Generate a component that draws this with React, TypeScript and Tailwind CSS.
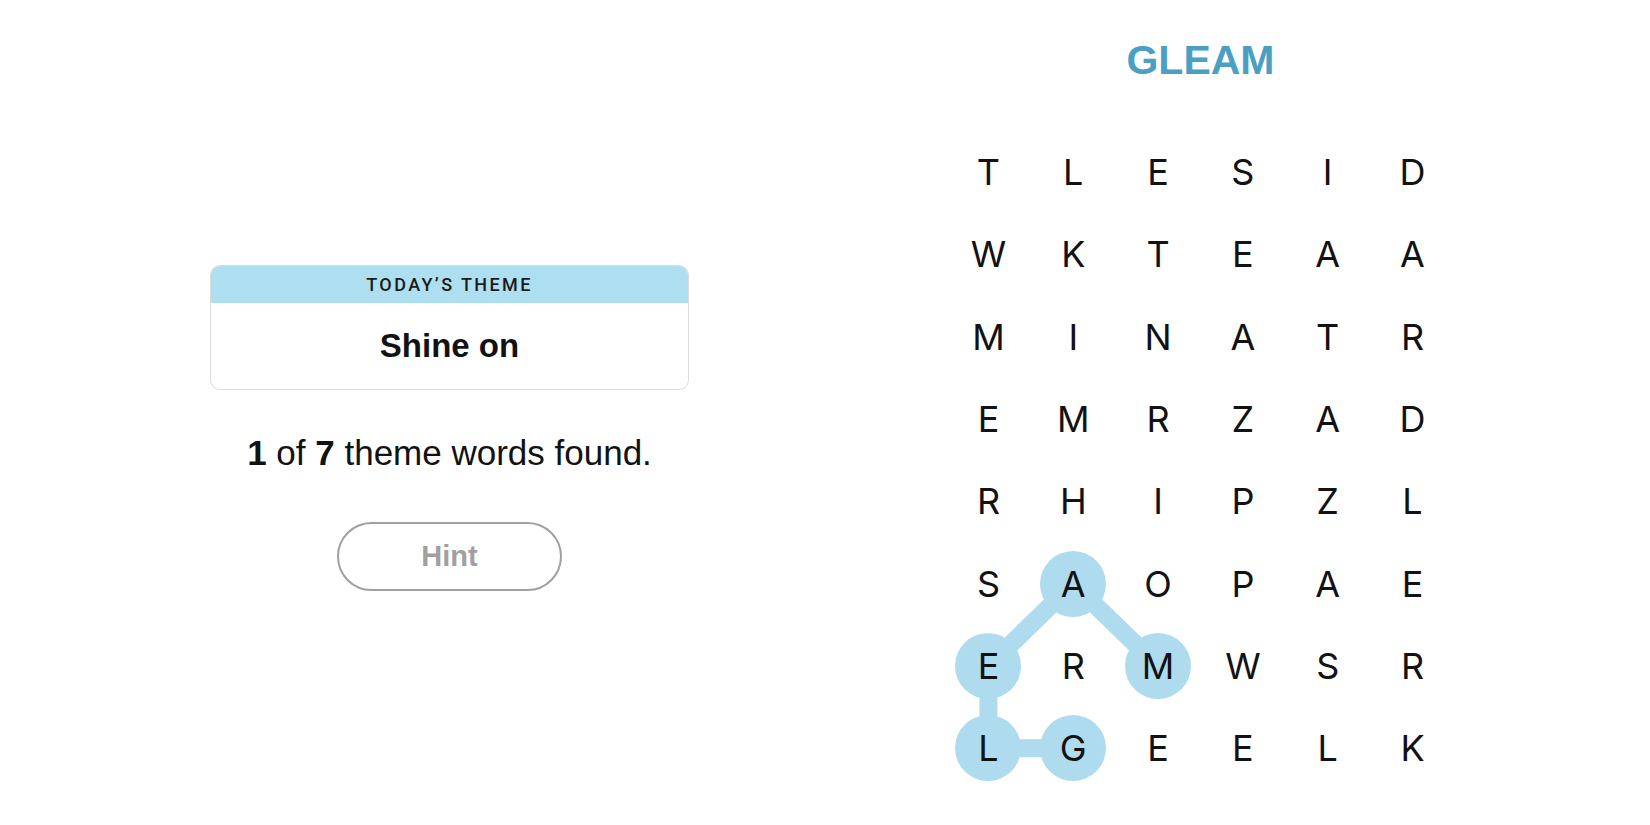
import React from "react";

const LETTERS = [
  "TLESID",
  "WKTEAA",
  "MINATR",
  "EMRZAD",
  "RHIPZL",
  "SAOPAE",
  "ERMWSR",
  "LGEELK",
];

const CW = 84.8;
const RH = 82.3;

// path cells [row, col]
const PATH: [number, number][] = [
  [6, 2],
  [5, 1],
  [6, 0],
  [7, 0],
  [7, 1],
];

const isSel = (r: number, c: number) => PATH.some(([pr, pc]) => pr === r && pc === c);

function Grid() {
  const w = CW * 6;
  const h = RH * 8;
  const pts = PATH.map(([r, c]) => `${c * CW + CW / 2},${r * RH + RH / 2}`).join(" ");
  return (
    <div className="relative mt-[50px]" style={{ width: w, height: h }}>
      <svg className="absolute inset-0" width={w} height={h} viewBox={`0 0 ${w} ${h}`}>
        <polyline points={pts} fill="none" stroke="#aedcee" strokeWidth={18} strokeLinejoin="round" />
      </svg>
      <div className="relative grid grid-cols-[repeat(6,84.8px)] auto-rows-[82.3px]">
        {LETTERS.map((row, r) =>
          row.split("").map((ch, c) => (
            <div key={`${r}-${c}`} className="relative flex items-center justify-center">
              {isSel(r, c) && (
                <div className="absolute left-1/2 top-1/2 h-[66px] w-[66px] -translate-x-1/2 -translate-y-1/2 rounded-full bg-[#aedcee]" />
              )}
              <span className="relative font-['Inter',sans-serif] text-[36px] font-normal leading-none text-[#121212]">
                {ch}
              </span>
            </div>
          ))
        )}
      </div>
    </div>
  );
}

export default function App() {
  return (
    <div className="flex h-[825px] w-full justify-center bg-white">
      <div className="flex w-[1502px]">
        <div className="flex flex-1 flex-col items-center">
          <div className="mt-[265px] w-[479px] overflow-hidden rounded-[10px] border border-[#dcdcdc]">
            <div className="flex h-[37px] items-center justify-center bg-[#aedff0] font-['Roboto',sans-serif] text-[18px] font-medium tracking-[2.4px] text-[#1a1a1a]">
              TODAY’S THEME
            </div>
            <div className="flex h-[86px] items-center justify-center font-['Liberation_Sans',sans-serif] text-[33px] font-bold text-[#121212]">
              Shine on
            </div>
          </div>
          <p className="mt-[43px] font-['Liberation_Sans',sans-serif] text-[35px] leading-[40px] text-[#121212]">
            <b>1</b> of <b>7</b> theme words found.
          </p>
          <button className="mt-[49px] flex h-[69px] w-[225px] items-center justify-center rounded-full border-2 border-[#a0a0a0] font-['Liberation_Sans',sans-serif] text-[29px] font-bold text-[#a0a0a0]">
            Hint
          </button>
        </div>
        <div className="flex flex-1 flex-col items-center">
          <h1 className="mt-[40px] font-['Liberation_Sans',sans-serif] text-[41px] font-bold leading-[41px] text-[#4a9fc2]">
            GLEAM
          </h1>
          <Grid />
        </div>
      </div>
    </div>
  );
}
